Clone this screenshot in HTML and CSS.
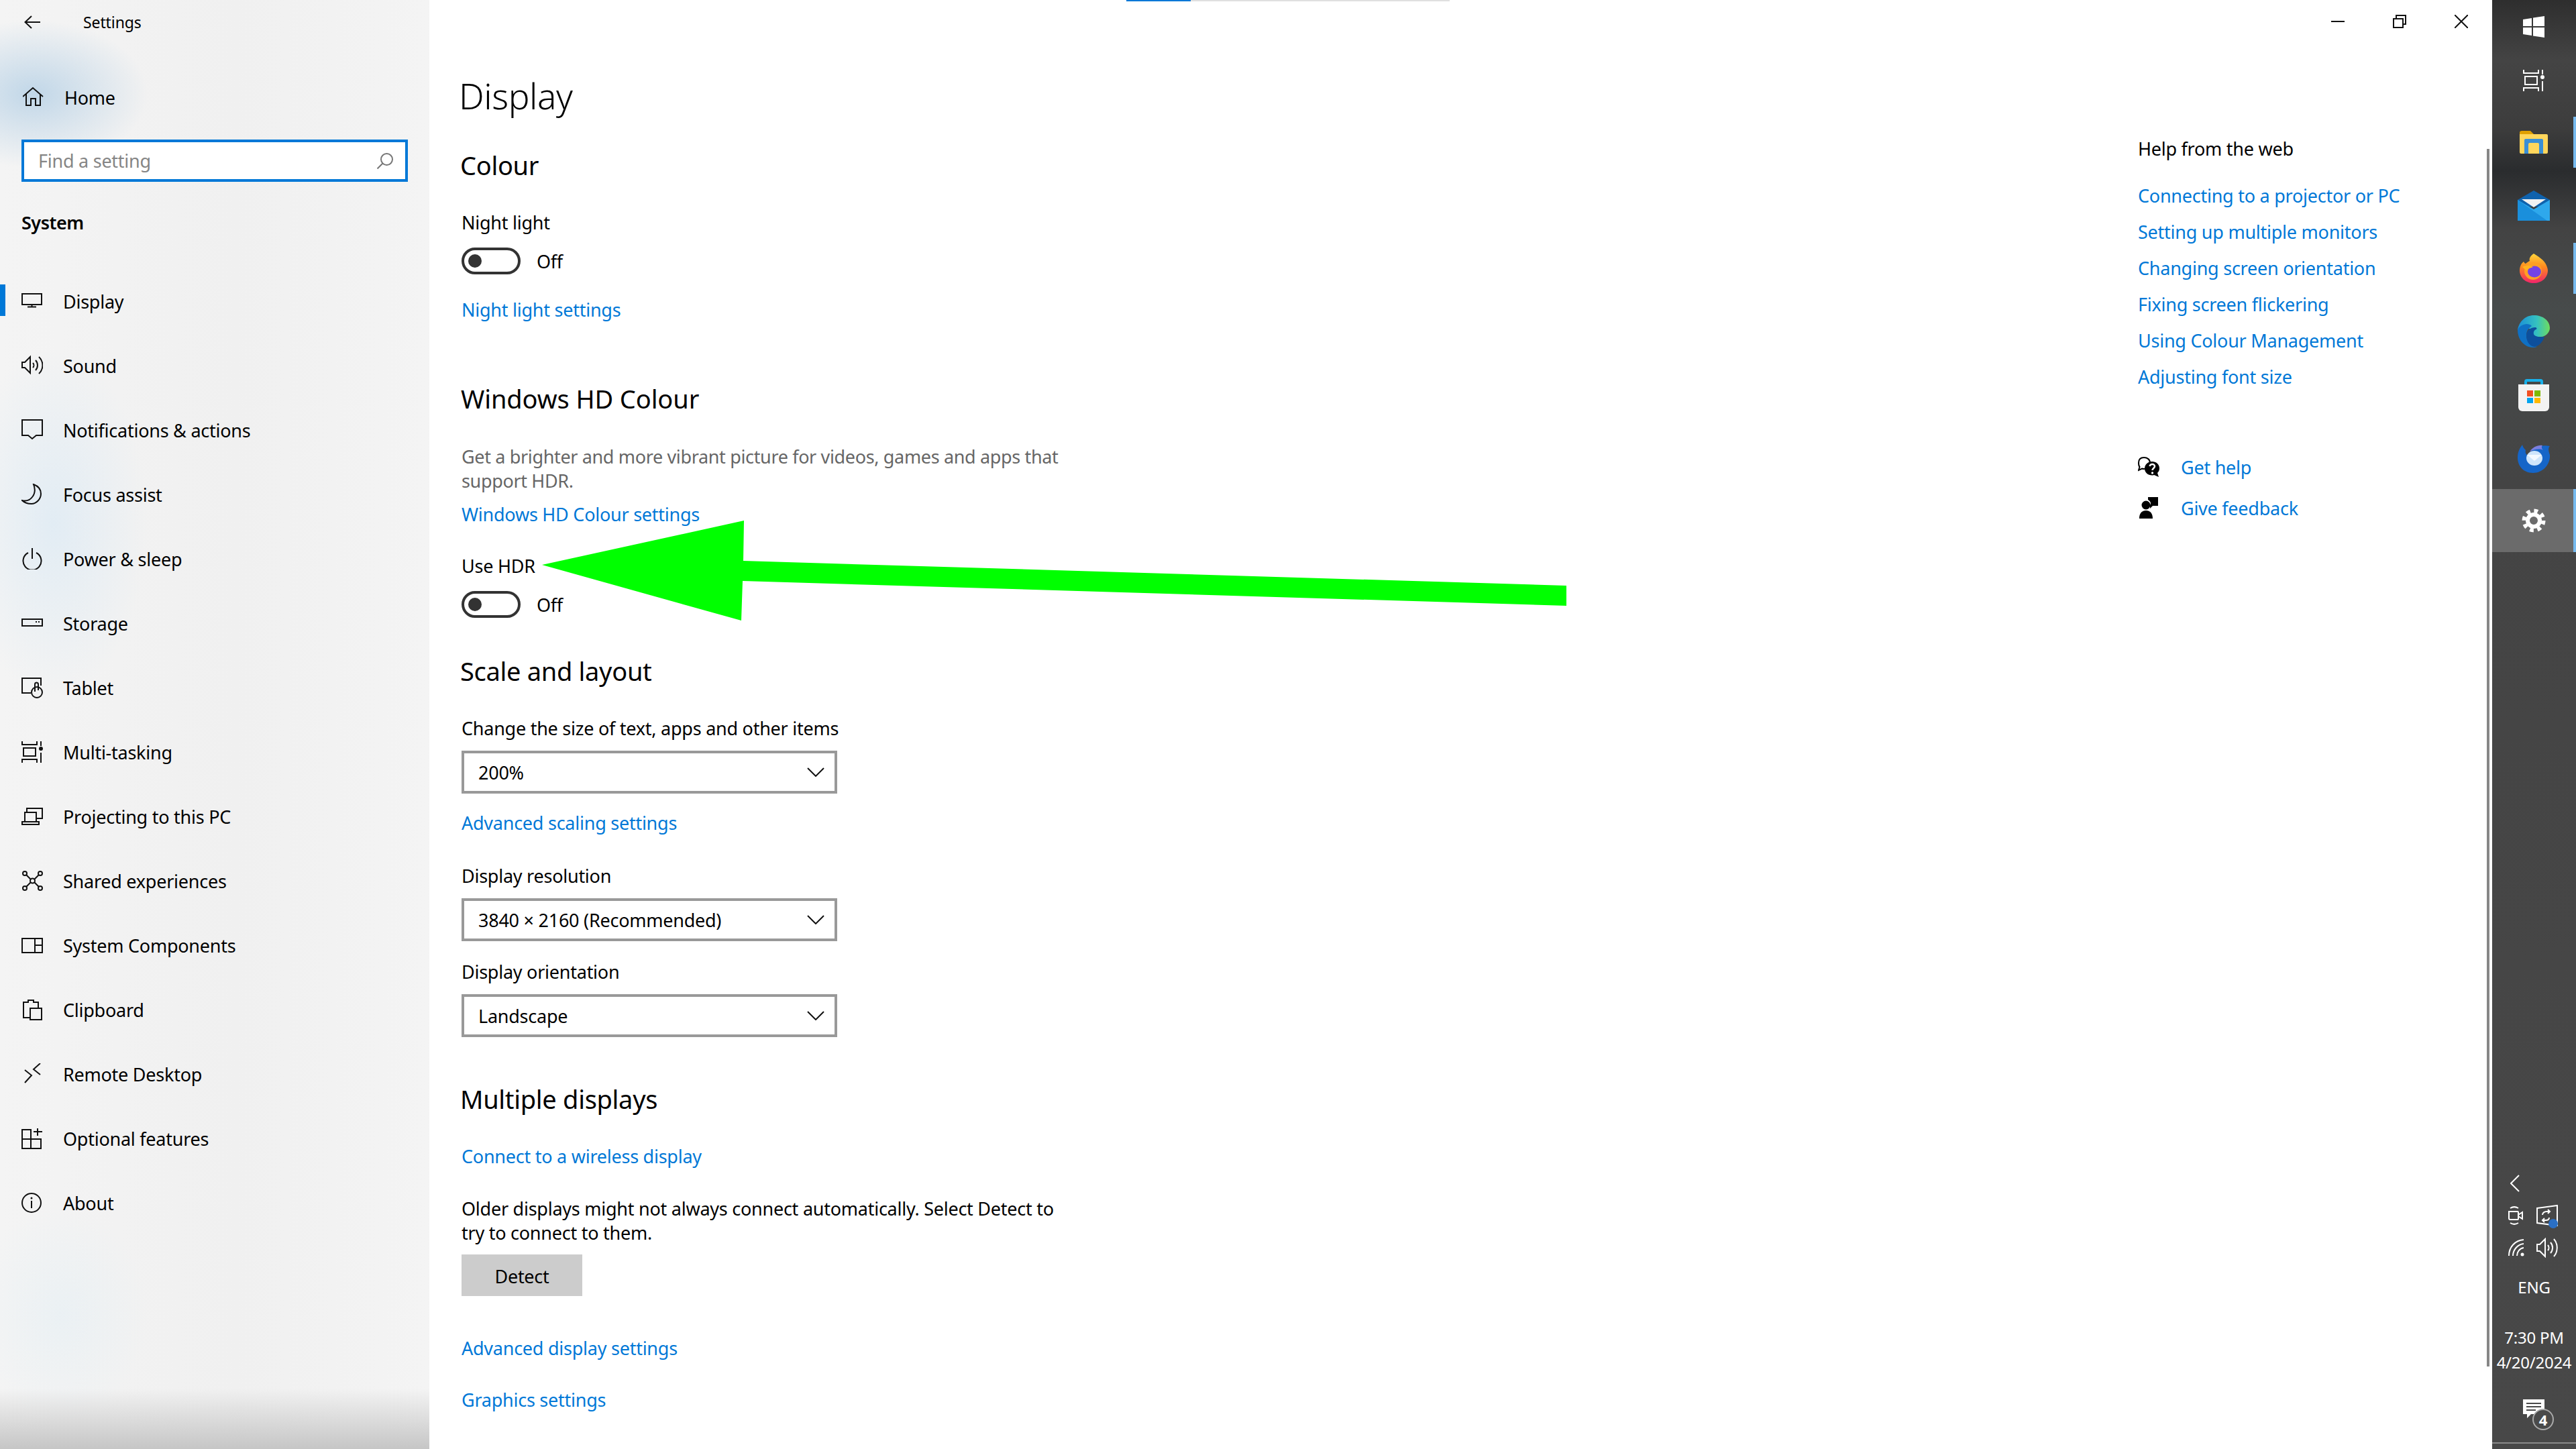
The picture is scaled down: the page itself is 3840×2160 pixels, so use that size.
FILE: index.html
```html
<!DOCTYPE html>
<html>
  <head>
    <meta charset="utf-8" />
    <title>Settings</title>
    <link rel="stylesheet" href="styles.css">
  </head>

  <body>
    <div class="page">
      <aside class="sidebar">
        <div class="title-row">
          <svg class="icon back-icon" viewBox="0 0 24 20"><path d="M11 1L1.500 10l9.500 9M2 10h22"/></svg>
          <span class="app-title">Settings</span>
        </div>
        <div class="home-row">
          <svg class="icon" viewBox="0 0 32 32"><path d="M0 15L15 2l15 13M5 11v17h7V18h7v10h7V11"/></svg>
          <span>Home</span>
        </div>
        <div class="search">
          <span>Find a setting</span>
          <svg class="icon search-icon" viewBox="0 0 24 24"><circle cx="14.500" cy="9.500" r="8.500"/><path d="M8.500 15.500L0.500 23.500"/></svg>
        </div>
        <div class="group-title">System</div>
        <nav class="nav">
          <div class="nav-item active">
            <svg class="icon" viewBox="0 0 32 32"><path d="M1 5h29v16H1zM15.500 21v3M9 24.500h13"/></svg>
            <span>Display</span>
          </div>
          <div class="nav-item">
            <svg class="icon" viewBox="0 0 32 32"><path d="M1 11h4l8-8v24l-8-8H1zM17 12a5 5 0 0 1 0 7M21 8a11 11 0 0 1 0 15M26 3a17 17 0 0 1 0 25"/></svg>
            <span>Sound</span>
          </div>
          <div class="nav-item">
            <svg class="icon" viewBox="0 0 32 32"><path d="M1 1h30v23H22l-6 5-6-5H1z"/></svg>
            <span>Notifications &amp; actions</span>
          </div>
          <div class="nav-item">
            <svg class="icon" viewBox="0 0 32 32"><path d="M18 1c8 3 11 9 11 14 0 8-7 15-14 15-6 0-11-2-14-5 12 3 23-9 17-24z"/></svg>
            <span>Focus assist</span>
          </div>
          <div class="nav-item">
            <svg class="icon" viewBox="0 0 32 32"><path d="M10 7a13.500 13.500 0 1 0 12 0M16 0v16"/></svg>
            <span>Power &amp; sleep</span>
          </div>
          <div class="nav-item">
            <svg class="icon" viewBox="0 0 32 32"><path d="M1 10h30v10H1zM21 14h2M25 14h2"/></svg>
            <span>Storage</span>
          </div>
          <div class="nav-item">
            <svg class="icon" viewBox="0 0 32 32"><path d="M14 24H1V2h28v11"/><circle cx="23" cy="23" r="8"/><path d="M20 22V11a2.500 2.500 0 0 1 5 0v9"/></svg>
            <span>Tablet</span>
          </div>
          <div class="nav-item">
            <svg class="icon" viewBox="0 0 32 32"><path d="M1 0v5h22V0M3 10h18v12H3zM1 32v-5h22v5M29 0v7M29 17v15"/><circle class="solid" cx="29" cy="11" r="3"/></svg>
            <span>Multi-tasking</span>
          </div>
          <div class="nav-item">
            <svg class="icon" viewBox="0 0 32 32"><path d="M8 9V4h23v15h-9M5 10h17v14H5zM1 28h25v-4H1z"/></svg>
            <span>Projecting to this PC</span>
          </div>
          <div class="nav-item">
            <svg class="icon" viewBox="0 0 32 32"><circle cx="5" cy="5" r="3"/><circle cx="28" cy="5" r="3"/><circle cx="5" cy="27" r="3"/><circle cx="28" cy="27" r="3"/><circle cx="16.500" cy="16" r="3.500"/><path d="M7 7l7 7M26 7l-7 7M7 25l7-7M26 25l-7-7"/></svg>
            <span>Shared experiences</span>
          </div>
          <div class="nav-item">
            <svg class="icon" viewBox="0 0 32 32"><path d="M1 6h30v21H1zM20 6v21M20 16h11"/></svg>
            <span>System Components</span>
          </div>
          <div class="nav-item">
            <svg class="icon" viewBox="0 0 32 32"><path d="M13 14h17v17H13zM13 28H3V5h7V2h8v3h7v9"/></svg>
            <span>Clipboard</span>
          </div>
          <div class="nav-item">
            <svg class="icon" viewBox="0 0 32 32"><path d="M5 10l10 8L5 29M28 0L18 9l10 8"/></svg>
            <span>Remote Desktop</span>
          </div>
          <div class="nav-item">
            <svg class="icon" viewBox="0 0 32 32"><path d="M1 3h13v28H1zM1 17h28v14H14M24 1v11M18 6h13"/></svg>
            <span>Optional features</span>
          </div>
          <div class="nav-item">
            <svg class="icon" viewBox="0 0 32 32"><circle cx="15" cy="16" r="14"/><path d="M15 13v11"/><circle class="solid" cx="15" cy="9" r="1.500"/></svg>
            <span>About</span>
          </div>
        </nav>
      </aside>

      <main class="window">
        <div class="window-col">
          <div class="window-controls">
            <svg class="icon" viewBox="0 0 20 20"><path d="M0 10h20"/></svg>
            <svg class="icon" viewBox="0 0 20 20"><path d="M1 6h14v13H1zM5 5V1h14v13h-3"/></svg>
            <svg class="icon" viewBox="0 0 20 20"><path d="M0 0l20 20M20 0L0 20"/></svg>
          </div>
          <div class="window-body">
            <section class="content">
              <h1>Display</h1>
              <h2 class="first">Colour</h2>
              <div class="label">Night light</div>
              <div class="toggle-row">
                <span class="toggle"></span>
                <span>Off</span>
              </div>
              <a class="link gap-32">Night light settings</a>

              <h2 class="hd-title">Windows HD Colour</h2>
              <p class="desc muted">Get a brighter and more vibrant picture for videos, games and apps that<br>support HDR.</p>
              <a class="link gap-13">Windows HD Colour settings</a>
              <div class="label gap-37">Use HDR</div>
              <div class="toggle-row">
                <span class="toggle"></span>
                <span>Off</span>
              </div>

              <h2 class="gap-49">Scale and layout</h2>
              <div class="label">Change the size of text, apps and other items</div>
              <div class="select">
                <span>200%</span>
                <svg class="icon" viewBox="0 0 26 14"><path d="M1 1l12 12L25 1"/></svg>
              </div>
              <a class="link gap-23">Advanced scaling settings</a>
              <div class="label">Display resolution</div>
              <div class="select">
                <span>3840 × 2160 (Recommended)</span>
                <svg class="icon" viewBox="0 0 26 14"><path d="M1 1l12 12L25 1"/></svg>
              </div>
              <div class="label gap-25">Display orientation</div>
              <div class="select">
                <span>Landscape</span>
                <svg class="icon" viewBox="0 0 26 14"><path d="M1 1l12 12L25 1"/></svg>
              </div>

              <h2 class="gap-62">Multiple displays</h2>
              <a class="link gap-39">Connect to a wireless display</a>
              <p class="desc">Older displays might not always connect automatically. Select Detect to<br>try to connect to them.</p>
              <button class="btn" type="button">Detect</button>
              <a class="link gap-57">Advanced display settings</a>
              <a class="link gap-37">Graphics settings</a>
            </section>

            <section class="help">
              <div class="help-title">Help from the web</div>
              <a class="help-link">Connecting to a projector or PC</a>
              <a class="help-link">Setting up multiple monitors</a>
              <a class="help-link">Changing screen orientation</a>
              <a class="help-link">Fixing screen flickering</a>
              <a class="help-link">Using Colour Management</a>
              <a class="help-link">Adjusting font size</a>
              <div class="help-action first">
                <svg viewBox="0 0 32 32">
                  <path class="bubble-line" d="M9 2c5 0 9 3 9 8s-4 9-9 9c-1 0-2 0-3-.5L1 21l1.500-5C1 14.500 1 12 1 10c0-5 3-8 8-8z"/>
                  <path d="M21 8c6 0 11 4 11 10 0 3-1 5-3 7l2 6-7-3c-1 .4-2 .5-3 .5-6 0-11-4-11-10S15 8 21 8z"/>
                  <path class="question" d="M17.500 15c.5-2 2-3 4-3s3.500 1.500 3.500 3c0 3-3.500 3-3.500 6"/>
                  <circle class="question-dot" cx="21.500" cy="25" r="1.700"/>
                </svg>
                <a class="link-text">Get help</a>
              </div>
              <div class="help-action">
                <svg viewBox="0 0 32 32">
                  <circle cx="12" cy="12" r="6.500"/>
                  <path d="M2 32c0-8 4-12 10-12s10 4 10 12zM15 0h15v13H22l-4 4v-5c2-2 1-6-3-8z"/>
                </svg>
                <a class="link-text">Give feedback</a>
              </div>
            </section>
          </div>
        </div>
        <div class="scrollbar"></div>
      </main>

      <div class="taskbar">
        <div class="task-btn start-btn">
          <svg width="32" height="32" viewBox="0 0 32 32" fill="#fff"><path d="M0 5l13-2v12H0zM15 2.600L32 0v15H15zM0 17h13v12L0 27zM15 17h17v15l-17-2.600z"/></svg>
        </div>
        <div class="task-btn view-btn">
          <svg class="icon light" viewBox="0 0 32 32"><path d="M1 0v5h22V0M3 10h18v12H3zM1 32v-5h22v5M29 0v7M29 17v15"/><circle class="solid" cx="29" cy="11" r="3"/></svg>
        </div>
        <div class="task-btn running">
          <svg width="42" height="34" viewBox="0 0 42 34">
            <path fill="#e0a000" d="M0 3a3 3 0 0 1 3-3h13l5 5H0z"/>
            <path fill="#ffd65c" d="M0 5h40a2 2 0 0 1 2 2v25a2 2 0 0 1-2 2H2a2 2 0 0 1-2-2z"/>
            <path fill="#3a8fd6" d="M7 34V14a2 2 0 0 1 2-2h24a2 2 0 0 1 2 2v20h-6V20a2 2 0 0 0-2-2h-12a2 2 0 0 0-2 2v14z"/>
          </svg>
        </div>
        <div class="task-btn">
          <svg width="48" height="45" viewBox="0 0 48 45">
            <path fill="#0f62ad" d="M0 14L24 0l24 14v10H0z"/>
            <path fill="#f1f1f1" d="M6 13h36L24 25z"/>
            <path fill="#2ea8ec" d="M0 14l24 14L48 14v31H0z"/>
            <path fill="#1a8fdc" d="M0 14l44 31H0z"/>
          </svg>
        </div>
        <div class="task-btn running">
          <svg width="42" height="44" viewBox="0 0 42 44">
            <defs>
              <linearGradient id="fox" x1="0" y1="0" x2="0" y2="1">
                <stop offset="0" stop-color="#ffd53b"/>
                <stop offset="0.45" stop-color="#ff8a1e"/>
                <stop offset="1" stop-color="#f0246a"/>
              </linearGradient>
            </defs>
            <path fill="url(#fox)" d="M21 0c6 4 13 8 17 14 3 5 4 9 4 11 0 11-9 19-21 19S0 36 0 25c0-5 2-10 6-13 1 2 2 3 3 3 2-2 4-3 6-4-1-3 0-7 6-11z"/>
            <circle fill="#ff9f24" cx="20" cy="26" r="13"/>
            <ellipse fill="#7542e5" cx="22" cy="27" rx="10" ry="8.500"/>
            <path fill="#ffb21f" d="M4 20c5-3 10-3 16 0-5 2-8 2-9 6-3-3-5-4-7-6z"/>
          </svg>
        </div>
        <div class="task-btn">
          <svg width="48" height="48" viewBox="0 0 48 48">
            <defs>
              <linearGradient id="edgeTop" x1="0" y1="0" x2="1" y2="0">
                <stop offset="0" stop-color="#1a8ed8"/>
                <stop offset="0.6" stop-color="#35c1c0"/>
                <stop offset="1" stop-color="#6fdc5e"/>
              </linearGradient>
            </defs>
            <path fill="url(#edgeTop)" d="M24 0c14 0 24 8 24 19 0 6-6 13-13 13H20c3-8 4-17-20-10C2 9 12 0 24 0z"/>
            <path fill="#0f70c4" d="M0 22c3-8 15-12 21-6-3 2-8 6-8 14 0 7 5 15 16 17-2 .6-4 1-6 1C10 48 0 36 0 22z"/>
            <path fill="#0d4f9c" d="M13 30c0-8 7-12 13-12 2 0 3 1 2 3-2 0-5 3-4 7 1 3 6 5 16 4-3 9-9 14-15 15-8-1-12-9-12-17z"/>
          </svg>
        </div>
        <div class="task-btn">
          <svg width="46" height="49" viewBox="0 0 46 49">
            <path fill="none" stroke="#19b0ea" stroke-width="4" d="M11 11V5a2 2 0 0 1 2-2h20a2 2 0 0 1 2 2v6"/>
            <path fill="#f3f3f3" d="M0 9h46v34a6 6 0 0 1-6 6H6a6 6 0 0 1-6-6z"/>
            <path fill="#f25022" d="M13 18h9v9h-9z"/>
            <path fill="#7fba00" d="M24 18h9v9h-9z"/>
            <path fill="#00a4ef" d="M13 29h9v8h-9z"/>
            <path fill="#ffb900" d="M24 29h9v8h-9z"/>
          </svg>
        </div>
        <div class="task-btn">
          <svg width="48" height="45" viewBox="0 0 48 45">
            <path fill="#1565c8" d="M7 3c1 4 3 6 5 8-1 3 0 6 3 8 6-9 16-17 33-14-3 3-2 8 0 13 1 14-10 27-25 27S0 34 0 22C0 14 3 8 7 3z"/>
            <path fill="#7b7fe0" d="M18 13c4-6 12-10 19-9-2 2-1 5 1 7-6-3-13-1-20 2z"/>
            <ellipse fill="#cfe5fb" cx="25" cy="23" rx="12" ry="11"/>
            <path fill="#f4f9ff" d="M14 18h22l-11 9z"/>
          </svg>
        </div>
        <div class="task-btn running current">
          <svg width="36" height="36" viewBox="0 0 36 36" fill="none" stroke="#fff">
            <circle cx="18" cy="18" r="9" stroke-width="6"/>
            <circle cx="18" cy="18" r="14.500" stroke-width="6" stroke-dasharray="5.700 5.690"/>
          </svg>
        </div>

        <div class="tray">
          <div class="tray-row">
            <svg class="icon light tray-chevron" viewBox="0 0 14 26"><path d="M13 1L1 13l12 12"/></svg>
          </div>
          <div class="tray-row">
            <svg class="icon light tray-camera" viewBox="0 0 22 30"><path d="M1 9h13a1 1 0 0 1 1 1v10a1 1 0 0 1-1 1H3a2 2 0 0 1-2-2zM15 14l6-4v10l-6-4M3 4c4-2.500 8-2.500 12 0M3 26c4 2.500 8 2.500 12 0"/></svg>
            <div class="screen-icon">
              <svg class="icon light" viewBox="0 0 32 32"><path d="M1 5l30-4v30L1 27zM9 15c0-3 3-5 6-5h5M17 7l3 3-3 3M19 19c0 3-2 4-5 4H9M12 26l-3-3 3-3"/></svg>
              <span class="tray-dot"></span>
            </div>
          </div>
          <div class="tray-row">
            <svg class="icon light tray-wifi" viewBox="0 0 24 26"><path d="M1 25C1 12 10 2 23 1M7 25c0-9 7-17 16-18M13 25c0-6 4-11 10-12"/><circle class="solid" cx="21" cy="23" r="2.500"/></svg>
            <svg class="icon light tray-volume" viewBox="0 0 32 30"><path d="M1 10h4l8-8v26l-8-8H1zM17 11a6 6 0 0 1 0 8M21 7a12 12 0 0 1 0 16M26 2a20 20 0 0 1 0 26"/></svg>
          </div>
          <div class="lang">ENG</div>
          <div class="clock">7:30 PM<br>4/20/2024</div>
          <div class="notify">
            <svg width="32" height="30" viewBox="0 0 32 30"><path fill="#fff" d="M0 0h32v22H12l-6 6v-6H0z"/><path stroke="#4a4a4a" stroke-width="2" d="M5 6h22M5 11h22M5 16h14"/></svg>
            <span class="notify-count">4</span>
          </div>
          <div class="tray-foot"></div>
        </div>
      </div>

      <div class="top-marker"><span></span></div>
      <svg class="arrow" viewBox="0 0 1527 149" width="1527" height="149"><path fill="#00ff00" d="M0 66L301 0l-1 60 1227 37v30L299 90l-2 59z"/></svg>
    </div>
  </body>
</html>
```

FILE: styles.css
```css
* {
  box-sizing: border-box;
}

html,
body {
  margin: 0;
  padding: 0;
}

body {
  font-family: "Noto Sans", "Open Sans", sans-serif;
  font-size: 27px;
  letter-spacing: -0.25px;
  line-height: 40px;
  color: #000;
  background: #fff;
}

.page {
  position: relative;
  display: flex;
  width: 3840px;
  height: 2160px;
  overflow: hidden;
}

.icon {
  display: block;
  flex: none;
  width: 32px;
  height: 32px;
  fill: none;
  stroke: #111;
  stroke-width: 2;
}

.icon .solid {
  fill: #111;
  stroke: none;
}

.icon.light {
  stroke: #fff;
}

.icon.light .solid {
  fill: #fff;
}

/* sidebar */

.sidebar {
  flex: none;
  width: 640px;
  background:
    linear-gradient(to bottom, rgba(190, 190, 190, 0) 2070px, #c6c6c6 2160px),
    radial-gradient(ellipse 170px 110px at 50px 140px, rgba(176, 205, 228, 0.75), rgba(176, 205, 228, 0)),
    radial-gradient(ellipse 140px 260px at 80px 780px, rgba(205, 228, 245, 0.45), rgba(205, 228, 245, 0)),
    radial-gradient(ellipse 130px 160px at 90px 1960px, rgba(215, 235, 245, 0.3), rgba(215, 235, 245, 0)),
    linear-gradient(to right, #f4f4f4, #f0f0f0 55%, #f4f4f4),
    #f2f2f2;
}

.title-row {
  display: flex;
  align-items: center;
  height: 66px;
  padding-left: 36px;
}

.back-icon {
  width: 24px;
  height: 20px;
}

.app-title {
  margin-left: 64px;
  font-size: 23px;
  letter-spacing: -0.1px;
}

.home-row {
  display: flex;
  align-items: center;
  height: 64px;
  margin-top: 47px;
  padding-left: 34px;
}

.home-row span {
  margin-left: 30px;
  padding-top: 2px;
}

.search {
  display: flex;
  align-items: center;
  justify-content: space-between;
  width: 576px;
  height: 63px;
  margin: 31px 0 0 32px;
  padding: 0 18px 0 21px;
  background: #fff;
  border: 4px solid #0078d7;
  color: #858585;
}

.search-icon {
  width: 24px;
  height: 24px;
  stroke: #777;
}

.group-title {
  margin: 41px 0 0 32px;
  font-weight: 600;
  letter-spacing: -0.5px;
}

.nav {
  margin-top: 49px;
}

.nav-item {
  position: relative;
  display: flex;
  align-items: center;
  height: 96px;
  padding-left: 32px;
}

.nav-item span {
  margin-left: 30px;
  padding-top: 2px;
}

.nav-item.active::before {
  content: "";
  position: absolute;
  left: 0;
  top: 23px;
  width: 8px;
  height: 47px;
  background: #0078d7;
}

/* window */

.window {
  display: flex;
  flex: 1;
  min-width: 0;
}

.window-col {
  display: flex;
  flex: 1;
  flex-direction: column;
  min-width: 0;
}

.window-controls {
  display: flex;
  justify-content: flex-end;
  gap: 72px;
  height: 64px;
  padding: 22px 28px 0 0;
}

.window-controls .icon {
  width: 20px;
  height: 20px;
}

.window-body {
  display: flex;
  flex: 1;
  justify-content: space-between;
}

.content {
  padding-left: 48px;
}

h1,
h2,
p {
  margin: 0;
  font-weight: 400;
}

h1 {
  height: 76px;
  margin: 39px 0 0 -4px;
  font-size: 53px;
  font-weight: 300;
  letter-spacing: -0.4px;
  line-height: 80px;
}

h2 {
  height: 56px;
  margin-left: -2px;
  font-size: 38px;
  letter-spacing: -0.3px;
  line-height: 60px;
}

h2.first {
  margin-top: 37px;
}

h2.hd-title {
  margin-top: 83px;
  margin-left: -1px;
  letter-spacing: -0.1px;
}

.label,
.link {
  height: 40px;
  line-height: 42px;
  white-space: nowrap;
}

.label {
  margin-top: 39px;
}

.toggle-row {
  display: flex;
  align-items: center;
  gap: 24px;
  height: 40px;
  margin-top: 18px;
}

.toggle-row span:last-child {
  padding-top: 2px;
}

.toggle {
  position: relative;
  display: block;
  width: 88px;
  height: 40px;
  border: 4px solid #333;
  border-radius: 20px;
}

.toggle::after {
  content: "";
  position: absolute;
  left: 6px;
  top: 6px;
  width: 20px;
  height: 20px;
  border-radius: 50%;
  background: #333;
}

.link,
.help-link,
.link-text {
  color: #0078d7;
}

.link {
  display: block;
}

.desc {
  margin-top: 41px;
  margin-bottom: -2px;
  line-height: 36px;
  white-space: nowrap;
}

.muted {
  margin-top: 43px;
  color: #666;
  letter-spacing: -0.35px;
}

.select {
  display: flex;
  align-items: center;
  justify-content: space-between;
  width: 560px;
  height: 64px;
  margin-top: 14px;
  padding: 0 15px 0 21px;
  background: #fff;
  border: 4px solid #999;
}

.select span {
  padding-top: 1px;
}

.select .icon {
  width: 26px;
  height: 14px;
}

.btn {
  display: block;
  width: 180px;
  height: 62px;
  margin-top: 16px;
  padding: 4px 0 0;
  border: none;
  background: #ccc;
  color: #000;
  font: inherit;
  letter-spacing: inherit;
}

.gap-13 { margin-top: 13px; }
.gap-23 { margin-top: 23px; }
.gap-25 { margin-top: 25px; }
.gap-32 { margin-top: 32px; }
.gap-37 { margin-top: 37px; }
.gap-39 { margin-top: 39px; }
.gap-49 { margin-top: 49px; }
.gap-57 { margin-top: 57px; }
.gap-62 { margin-top: 62px; }

.help {
  flex: none;
  width: 520px;
  padding-top: 137px;
}

.help-title,
.help-link {
  height: 40px;
  line-height: 42px;
}

.help-title {
  margin-bottom: 30px;
}

.help-link {
  display: block;
  margin-bottom: 14px;
}

.help-action {
  display: flex;
  align-items: center;
  gap: 32px;
  margin-top: 19px;
}

.help-action.first {
  margin-top: 94px;
}

.help-action svg {
  flex: none;
  width: 32px;
  height: 32px;
  fill: #000;
}

.link-text {
  padding-top: 2px;
}

.bubble-line {
  fill: #fff;
  stroke: #000;
  stroke-width: 2;
}

.question {
  fill: none;
  stroke: #fff;
  stroke-width: 2.500;
}

.help-action .question-dot {
  fill: #fff;
}

.scrollbar {
  flex: none;
  width: 4px;
  height: 1815px;
  margin: 222px 4px 0 0;
  background: #868686;
}

/* taskbar */

.taskbar {
  display: flex;
  flex: none;
  flex-direction: column;
  width: 125px;
  color: #fff;
  background: linear-gradient(to bottom, #2e2e2e 0, #444 90px, #3d3d3d 190px, #2a2c2e 255px, #434343 340px, #474b4b 460px, #444 720px, #484848 2160px);
}

.task-btn {
  position: relative;
  display: flex;
  flex: none;
  align-items: center;
  justify-content: center;
  height: 94px;
  padding-right: 1px;
}

.start-btn {
  height: 80px;
}

.view-btn {
  height: 85px;
  padding-bottom: 6px;
}

.task-btn.running::after {
  content: "";
  position: absolute;
  right: 0;
  top: 9px;
  bottom: 9px;
  width: 4px;
  background: #76b9ed;
}

.task-btn.current {
  background: #6b6b6b;
}

.task-btn.current::after {
  top: 0;
  bottom: 0;
}

.tray {
  display: flex;
  flex-direction: column;
  margin-top: auto;
}

.tray-row {
  display: flex;
  align-items: center;
  gap: 20px;
  height: 48px;
  padding-left: 24px;
}

.tray-chevron {
  width: 14px;
  height: 26px;
  margin-left: 3px;
}

.tray-camera {
  width: 22px;
  height: 30px;
}

.tray-wifi {
  width: 24px;
  height: 26px;
  margin-right: -2px;
}

.tray-volume {
  width: 32px;
  height: 30px;
}

.screen-icon {
  position: relative;
}

.tray-dot {
  position: absolute;
  right: 0;
  bottom: -3px;
  width: 14px;
  height: 14px;
  border-radius: 50%;
  background: #2a6fc4;
}

.lang {
  height: 70px;
  font-size: 24px;
  line-height: 70px;
  text-align: center;
}

.clock {
  margin-top: 21px;
  font-size: 24px;
  line-height: 37px;
  text-align: center;
  white-space: nowrap;
}

.notify {
  position: relative;
  height: 101px;
  padding: 37px 0 0 46px;
}

.notify svg {
  display: block;
}

.notify-count {
  position: absolute;
  left: 60px;
  top: 51px;
  width: 32px;
  height: 32px;
  border: 2px solid #aaa;
  border-radius: 50%;
  background: #4a4a4a;
  font-size: 22px;
  font-weight: 700;
  line-height: 28px;
  text-align: center;
}

.tray-foot {
  height: 10px;
  border-top: 2px solid #8a8a8a;
}

/* things lying over the window */

.top-marker {
  position: absolute;
  left: 1679px;
  top: 0;
  width: 482px;
  height: 2px;
  background: #e0e0e0;
}

.top-marker span {
  display: block;
  width: 96px;
  height: 2px;
  background: #0078d7;
}

.arrow {
  position: absolute;
  left: 808px;
  top: 776px;
}
```
